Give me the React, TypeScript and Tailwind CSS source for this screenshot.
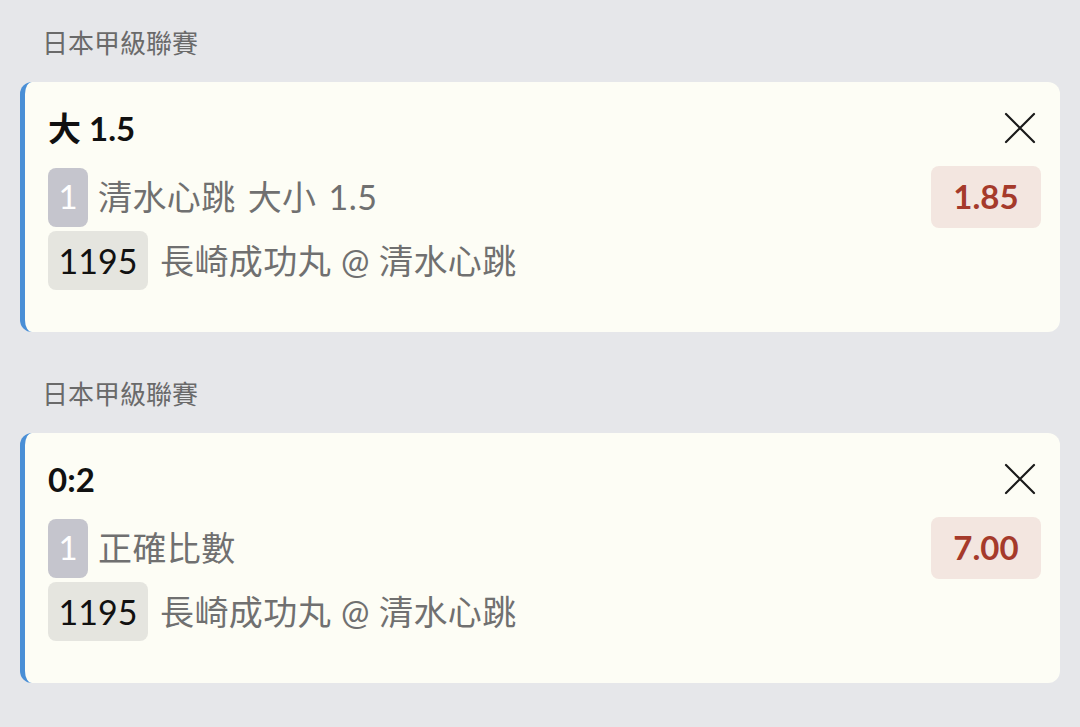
type Bet = {
  league: string
  title: string
  market: string
  odds: string
  code: string
  match: string
}

const bets: Bet[] = [
  { league: '日本甲級聯賽', title: '大 1.5', market: '清水心跳 大小 1.5', odds: '1.85', code: '1195', match: '長崎成功丸 @ 清水心跳' },
  { league: '日本甲級聯賽', title: '0:2', market: '正確比數', odds: '7.00', code: '1195', match: '長崎成功丸 @ 清水心跳' },
]

const font = { fontFamily: 'Lato, "Noto Sans CJK TC", sans-serif' }

// 關閉按鈕 (細線 X)
function CloseIcon() {
  return (
    <svg width="32" height="32" viewBox="0 0 32 32" className="mr-[5px] text-[#1a1a1a]">
      <path d="M2 2 L30 30 M30 2 L2 30" stroke="currentColor" strokeWidth="2.2" strokeLinecap="round" fill="none" />
    </svg>
  )
}

function BetCard({ bet }: { bet: Bet }) {
  return (
    <div className="h-[250px] rounded-[12px] border-l-[5px] border-[#4a8fd6] bg-[#fdfdf5] pl-[23px] pr-[19px] pt-[26px]">
      {/* 標題 + 關閉 */}
      <div className="flex h-[40px] items-center justify-between">
        <div className="text-[33px] font-bold leading-[40px] text-[#111]">{bet.title}</div>
        <CloseIcon />
      </div>

      {/* 投注項 + 賠率 */}
      <div className="mt-[18px] flex items-center justify-between">
        <div className="flex items-center gap-[10px]">
          <div className="flex h-[59px] w-[40px] items-center justify-center rounded-[8px] bg-[#c5c5cd] text-[33px] text-white">1</div>
          <div className="text-[34px] leading-none tracking-[0.4px] text-[#707070] [word-spacing:3px]">{bet.market}</div>
        </div>
        <div className="flex h-[62px] w-[110px] items-center justify-center rounded-[8px] bg-[#f3e6e0] text-[33px] font-bold text-[#a53a2b]">
          {bet.odds}
        </div>
      </div>

      {/* 賽事 */}
      <div className="mt-[3px] flex items-center gap-[12px]">
        <div className="flex h-[59px] w-[100px] items-center justify-center rounded-[8px] bg-[#e5e5df] text-[34px] text-[#111]">{bet.code}</div>
        <div className="text-[34px] leading-none tracking-[0.4px] text-[#707070]">{bet.match}</div>
      </div>
    </div>
  )
}

export default function App() {
  return (
    <div className="min-h-[727px] w-full bg-[#e6e7ea] px-[20px] pt-[25px] pb-[45px]" style={font}>
      {bets.map((bet, i) => (
        <div key={i} className={i > 0 ? 'mt-[44px]' : ''}>
          <div className="pl-[22px] text-[26px] leading-[36px] text-[#6a6a6a]">{bet.league}</div>
          <div className="mt-[21px] w-[1040px]">
            <BetCard bet={bet} />
          </div>
        </div>
      ))}
    </div>
  )
}
